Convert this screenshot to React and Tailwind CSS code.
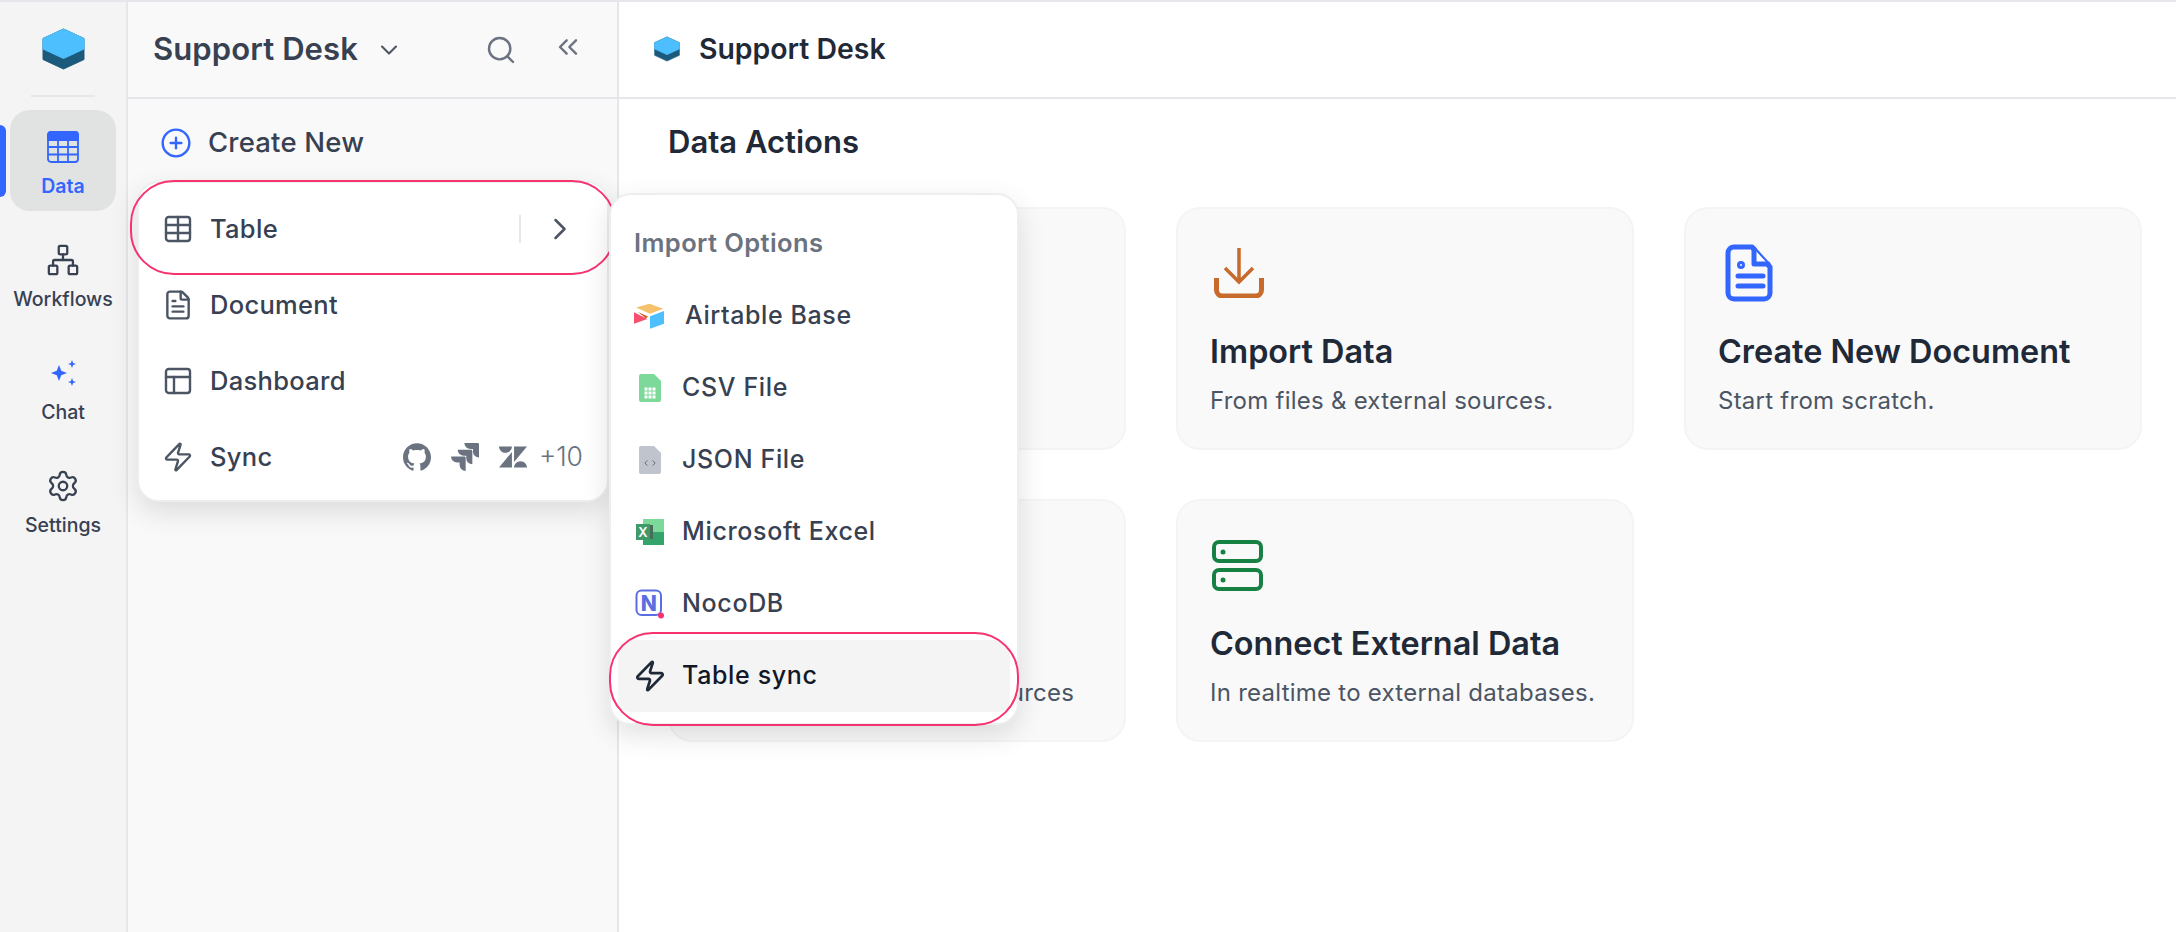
import { ChevronDown, ChevronRight, ChevronsLeft, CirclePlus, FileText, Network, PanelsTopLeft, Search, Settings, Table, Zap } from "lucide-react";
import { SiGithub, SiJira, SiZendesk } from "react-icons/si";

function Logo({ className }) {
  return (
    <svg viewBox="0 0 43 42" className={className}>
      <path d="M21.5 1 42 10.5v21L21.5 41 1 31.5v-21Z" fill="#1c5a7c" stroke="#1c5a7c" strokeLinejoin="round" />
      <path d="M21.5 1 42 10.5V21l-20.5 9.5L1 21V10.5Z" fill="#4dbfff" stroke="#4dbfff" strokeLinejoin="round" />
    </svg>
  );
}

function DataIcon() {
  return (
    <svg viewBox="0 0 32 32" className="w-[32px] h-[32px]" fill="none" stroke="#3366ff" strokeWidth="1.8">
      <rect x="1" y="1" width="30" height="30" rx="3" />
      <path d="M1 4a3 3 0 0 1 3-3h24a3 3 0 0 1 3 3v5H1Z" fill="#3366ff" />
      <path d="M11 9v22M21 9v22M1 16h30M1 23.5h30" />
    </svg>
  );
}

function star(cx, cy, r) {
  const k = r * 0.28;
  return `M${cx} ${cy - r}L${cx + k} ${cy - k}L${cx + r} ${cy}L${cx + k} ${cy + k}L${cx} ${cy + r}L${cx - k} ${cy + k}L${cx - r} ${cy}L${cx - k} ${cy - k}Z`;
}

function ChatIcon() {
  return (
    <svg viewBox="0 0 32 32" className="w-[32px] h-[32px]" fill="#3366ff">
      <path d={star(12, 16, 8)} />
      <path d={star(25, 7, 4)} />
      <path d={star(25, 25, 4)} />
    </svg>
  );
}

function AirtableIcon() {
  return (
    <svg viewBox="0 0 30 26" className="w-[30px] h-[26px]">
      <path d="M2 4.5 15.5.7l13.8 5L16 10.7Z" fill="#f5c16c" />
      <path d="M16 13.3 30 8v12.7l-14 5Z" fill="#4dbfff" />
      <path d="M0 9.3 13.3 16 0 20.7Z" fill="#f7506f" />
      <path d="M4 9l10 4.5-2 2Z" fill="#c8602c" />
    </svg>
  );
}

function CsvIcon() {
  const cells = [5.5, 9.5, 13.5];
  return (
    <svg viewBox="0 0 22 28" className="w-[22px] h-[28px]">
      <path d="M2 0h13l7 7v19a2 2 0 0 1-2 2H2a2 2 0 0 1-2-2V2a2 2 0 0 1 2-2Z" fill="#7dd99a" />
      {cells.map((x) =>
        cells.map((y) => <rect key={`${x}-${y}`} x={x} y={y + 8} width="3" height="3" fill="#fff" />)
      )}
    </svg>
  );
}

function JsonIcon() {
  return (
    <svg viewBox="0 0 22 28" className="w-[22px] h-[28px]">
      <path d="M2 0h13l7 7v19a2 2 0 0 1-2 2H2a2 2 0 0 1-2-2V2a2 2 0 0 1 2-2Z" fill="#c0c4cc" />
      <path d="M8.5 14.5 5.8 17l2.7 2.5M13.5 14.5l2.7 2.5-2.7 2.5" fill="none" stroke="#6b7280" strokeWidth="1" />
    </svg>
  );
}

function ExcelIcon() {
  return (
    <svg viewBox="0 0 28 26" className="w-[28px] h-[26px]">
      <rect x="7" width="21" height="13" fill="#7dd99a" />
      <rect x="7" y="13" width="21" height="13" fill="#35a36c" />
      <rect x="14" y="6" width="3" height="14" fill="#4b6b5a" />
      <rect y="5" width="14" height="16" fill="#3f9a68" />
      <text x="7" y="18" textAnchor="middle" fontSize="13" fontWeight="600" fill="#fff">X</text>
    </svg>
  );
}

function NocoIcon() {
  return (
    <svg viewBox="0 0 30 30" className="w-[30px] h-[30px]">
      <rect x="1.5" y="1.5" width="24.5" height="24.5" rx="5" fill="none" stroke="#5b6ee1" strokeWidth="2" />
      <text x="13.7" y="21.5" textAnchor="middle" fontSize="21" fontWeight="800" fill="#5b6ee1">N</text>
      <circle cx="26" cy="26.5" r="3" fill="#f7336f" />
    </svg>
  );
}

function ImportIcon() {
  return (
    <svg viewBox="0 0 50 50" className="w-[50px] h-[50px] ml-[4px]" fill="none" stroke="#c86a2c">
      <path d="M25 0v32M11 20l14 14 14-14" strokeWidth="3.5" />
      <path d="M2.5 30v12a6 6 0 0 0 6 6h33a6 6 0 0 0 6-6V30" strokeWidth="5" />
    </svg>
  );
}

function DocIcon() {
  return (
    <svg viewBox="0 0 48 58" className="w-[48px] h-[58px] ml-[7px]" fill="none" stroke="#3366ff" strokeWidth="5" strokeLinecap="round" strokeLinejoin="round">
      <path d="M9 3h18l18 20v26a6 6 0 0 1-6 6H9a6 6 0 0 1-6-6V9a6 6 0 0 1 6-6Z" />
      <path d="M29 5v15h14" fill="#fff" />
      <path d="M13 32h25M13 42h25" />
      <circle cx="16" cy="21" r="1.5" />
    </svg>
  );
}

function ServerIcon() {
  return (
    <svg viewBox="0 0 51 51" className="w-[51px] h-[51px] ml-[2px]" fill="#178043">
      <rect x="2" y="2" width="47" height="19" rx="5" fill="none" stroke="#178043" strokeWidth="4" />
      <rect x="2" y="30" width="47" height="19" rx="5" fill="none" stroke="#178043" strokeWidth="4" />
      <circle cx="11" cy="12" r="2.5" />
      <circle cx="11" cy="40" r="2.5" />
    </svg>
  );
}

const railItems = [
  { label: "Data", icon: <DataIcon />, active: true },
  { label: "Workflows", icon: <Network className="w-[34px] h-[34px] text-[#374151]" strokeWidth={1.6} /> },
  { label: "Chat", icon: <ChatIcon /> },
  { label: "Settings", icon: <Settings className="w-[34px] h-[34px] text-[#374151]" strokeWidth={1.6} /> },
];

const importOptions = [
  { label: "CSV File", icon: <CsvIcon /> },
  { label: "JSON File", icon: <JsonIcon /> },
  { label: "Microsoft Excel", icon: <ExcelIcon /> },
  { label: "NocoDB", icon: <NocoIcon /> },
];

const cards = [
  { title: "Create New Table", sub: "Start from scratch.", icon: <DocIcon /> },
  { title: "Import Data", sub: "From files & external sources.", icon: <ImportIcon /> },
  { title: "Create New Document", sub: "Start from scratch.", icon: <DocIcon /> },
  { title: "Sync Data", sub: "From over nine external sources", icon: <Zap className="w-[50px] h-[50px]" /> },
  { title: "Connect External Data", sub: "In realtime to external databases.", icon: <ServerIcon /> },
];

function MenuRow({ icon, label, children }) {
  return (
    <div className="relative flex items-center h-[76px] pl-[23px] pr-[24px] text-[#374151]">
      <span className="w-[32px] flex justify-center text-[#4b5563]">{icon}</span>
      <span className="ml-[16px] text-[25.5px] font-medium tracking-[0.3px]">{label}</span>
      {children}
    </div>
  );
}

export default function App() {
  const iconCls = "w-[32px] h-[32px]";
  return (
    <div className="flex w-full h-[932px] border-t-2 border-[#e5e7eb] bg-white overflow-hidden font-[Inter,sans-serif]">
      {/* RAIL */}
      <div className="w-[128px] shrink-0 bg-[#f4f4f5] border-r-2 border-[#e5e7eb] flex flex-col items-center">
        <div className="h-[95px] w-[64px] flex items-center justify-center border-b-2 border-[#e5e7eb]">
          <Logo className="w-[43px] h-[42px]" />
        </div>
        <div className="relative w-full flex flex-col items-center gap-3 mt-[13px]">
          {railItems.map((item) => (
            <div
              key={item.label}
              className={`w-[106px] h-[101px] rounded-[20px] flex flex-col items-center pt-[20px] ${item.active ? "bg-[#e1e3e3]" : ""}`}
            >
              <div className="h-[34px] flex items-center justify-center">{item.icon}</div>
              <span className={`mt-[8px] text-[19.5px] font-medium whitespace-nowrap ${item.active ? "font-semibold text-[#3366ff]" : "text-[#374151]"}`}>
                {item.label}
              </span>
            </div>
          ))}
          <div className="absolute left-0 top-[15px] w-[6px] h-[72px] rounded-r-md bg-[#3366ff]" />
        </div>
      </div>

      {/* SIDEBAR */}
      <div className="relative z-10 w-[491px] shrink-0 bg-[#f9f9fa] border-r-2 border-[#e5e7eb]">
        <div className="h-[97px] border-b-2 border-[#e5e7eb] flex items-center pl-[25px] pr-[33px] text-[#374151]">
          <span className="text-[31px] font-semibold tracking-[0.1px] whitespace-nowrap">Support Desk</span>
          <ChevronDown className="ml-[17px] w-[28px] h-[28px] text-[#4b5563]" strokeWidth={1.8} />
          <Search className="ml-auto w-[32px] h-[32px] text-[#6b7280]" strokeWidth={1.8} />
          <ChevronsLeft className="ml-[35px] w-[32px] h-[32px] text-[#6b7280] -translate-y-[3px]" strokeWidth={1.8} />
        </div>
        <div className="flex items-center h-[60px] mt-[14px] pl-[32px] text-[#374151]">
          <CirclePlus className="w-[32px] h-[32px] text-[#3366ff]" strokeWidth={1.8} />
          <span className="ml-[16px] text-[27.5px] font-medium tracking-[0.2px]">Create New</span>
        </div>

        {/* CREATE MENU */}
        <div className="absolute left-[9px] top-[179px] w-[472px] h-[321px] pt-[8px] bg-white border-2 border-[#eceef0] rounded-[22px] shadow-[0_10px_28px_rgba(0,0,0,0.12)]">
          <MenuRow icon={<Table className={iconCls} strokeWidth={1.8} />} label="Table">
            <span className="ml-auto w-[2px] h-[28px] bg-[#e5e7eb]" />
            <ChevronRight className="ml-[21px] mr-[5px] w-[36px] h-[36px] text-[#4b5563]" strokeWidth={1.7} />
            <div className="absolute -left-[9px] -right-[9px] -top-[11px] -bottom-[8px] border-2 border-[#f7336f] rounded-[44px]" />
          </MenuRow>
          <MenuRow icon={<FileText className={iconCls} strokeWidth={1.8} />} label="Document" />
          <MenuRow icon={<PanelsTopLeft className={iconCls} strokeWidth={1.8} />} label="Dashboard" />
          <MenuRow icon={<Zap className={iconCls} strokeWidth={1.8} />} label="Sync">
            <div className="ml-auto flex items-center gap-[20px] text-[#6b7280]">
              <SiGithub className="w-[28px] h-[28px]" />
              <SiJira className="w-[28px] h-[28px]" />
              <SiZendesk className="w-[28px] h-[28px]" />
            </div>
            <span className="ml-[12px] text-[26.5px] font-light text-[#6b7280]">+10</span>
          </MenuRow>
        </div>

        {/* IMPORT MENU */}
        <div className="absolute left-[481px] top-[191px] w-[410px] h-[532px] bg-white border-2 border-[#eceef0] rounded-[22px] shadow-[0_10px_28px_rgba(0,0,0,0.12)]">
          <div className="h-[85px] pt-[12px] pl-[23px] flex items-center text-[25.5px] font-semibold tracking-[0.4px] text-[#6b7280]">
            Import Options
          </div>
          <div className="flex items-center h-[72px] mx-[7px] pl-[14px]">
            <span className="w-[34px] flex justify-center"><AirtableIcon /></span>
            <span className="ml-[19px] text-[25px] font-medium tracking-[0.6px] text-[#374151]">Airtable Base</span>
          </div>
          {importOptions.map((opt) => (
            <div key={opt.label} className="flex items-center h-[72px] mx-[7px] pl-[14px]">
              <span className="w-[36px] flex justify-center">{opt.icon}</span>
              <span className="ml-[14px] text-[25px] font-medium tracking-[0.65px] text-[#374151]">{opt.label}</span>
            </div>
          ))}
          <div className="relative flex items-center h-[72px] mx-[7px] pl-[14px] bg-[#f4f4f5] rounded-[10px]">
            <span className="w-[36px] flex justify-center"><Zap className="w-[34px] h-[34px] text-[#1f2937]" strokeWidth={1.9} /></span>
            <span className="ml-[14px] text-[25px] font-medium tracking-[0.65px] text-[#111827]">Table sync</span>
            <div className="absolute -left-[9px] -right-[9px] -top-[8px] -bottom-[14px] border-2 border-[#f7336f] rounded-[44px]" />
          </div>
        </div>
      </div>

      {/* MAIN */}
      <div className="flex-1 min-w-0">
        <div className="h-[97px] border-b-2 border-[#e5e7eb] flex items-center pl-[35px]">
          <Logo className="w-[26px] h-[26px] -translate-y-[1px]" />
          <span className="ml-[19px] text-[28.4px] font-semibold text-[#1f2937]">Support Desk</span>
        </div>
        <div className="pl-[49px] pr-[34px]">
          <h1 className="h-[86px] mb-[22px] flex items-center text-[31px] font-semibold text-[#1f2937]">Data Actions</h1>
          <div className="grid grid-cols-3 gap-x-[50px] gap-y-[49px]">
            {cards.map((card) => (
              <div key={card.title} className="h-[243px] bg-[#f9f9fa] border-2 border-[#f4f4f5] rounded-[24px] pl-[32px] pt-[34px]">
                <div className="h-[60px] flex items-center">{card.icon}</div>
                <h2 className="mt-[29px] h-[40px] flex items-center text-[32.4px] font-semibold text-[#1f2937] whitespace-nowrap">{card.title}</h2>
                <p className="mt-[13px] h-[32px] flex items-center text-[24px] text-[#4b5563] tracking-[0.25px] whitespace-nowrap">{card.sub}</p>
              </div>
            ))}
          </div>
        </div>
      </div>
    </div>
  );
}
